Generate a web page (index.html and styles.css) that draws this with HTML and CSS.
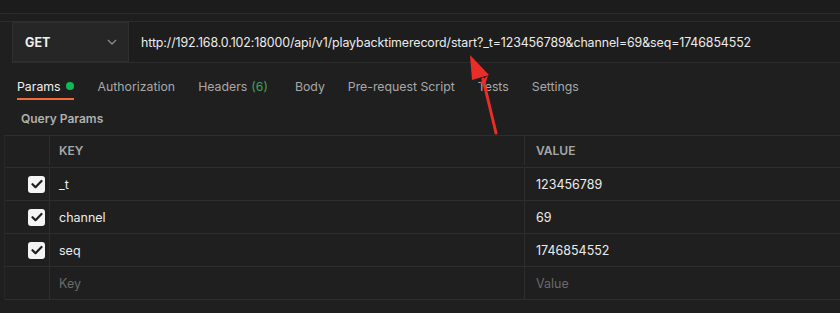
FILE: index.html
```html
<!DOCTYPE html>
<html>
<head>
<meta charset="utf-8">
<link rel="stylesheet" href="styles.css">
</head>
<body>
<div class="app">
  <div class="topstrip"><div class="strip-a"></div><div class="strip-b"></div></div>
  <div class="request">
    <div class="method">
      <span class="method-name">GET</span>
      <svg class="chev" width="10" height="6" viewBox="0 0 10 6"><path d="M1 1l4 4 4-4" fill="none" stroke="#8a8a8a" stroke-width="1.3"/></svg>
    </div>
    <div class="url">http://192.168.0.102:18000/api/v1/playbacktimerecord/start?_t=123456789&amp;channel=69&amp;seq=1746854552</div>
  </div>
  <div class="tabs">
    <div class="tab active">Params <span class="dot"></span></div>
    <div class="tab">Authorization</div>
    <div class="tab tab-wide">Headers <span class="count">(6)</span></div>
    <div class="tab">Body</div>
    <div class="tab">Pre-request Script</div>
    <div class="tab">Tests</div>
    <div class="tab">Settings</div>
  </div>
  <div class="qp">Query Params</div>
  <div class="table">
    <div class="row head">
      <div class="c-check"></div>
      <div class="c-key">KEY</div>
      <div class="c-val">VALUE</div>
    </div>
    <div class="row">
      <div class="c-check"><span class="cb"><svg width="12" height="10" viewBox="0 0 12 10"><path d="M1.5 5.2l3 3 6-6.2" fill="none" stroke="#1e1e1e" stroke-width="2.2" stroke-linecap="round" stroke-linejoin="round"/></svg></span></div>
      <div class="c-key">_t</div>
      <div class="c-val">123456789</div>
    </div>
    <div class="row">
      <div class="c-check"><span class="cb"><svg width="12" height="10" viewBox="0 0 12 10"><path d="M1.5 5.2l3 3 6-6.2" fill="none" stroke="#1e1e1e" stroke-width="2.2" stroke-linecap="round" stroke-linejoin="round"/></svg></span></div>
      <div class="c-key">channel</div>
      <div class="c-val">69</div>
    </div>
    <div class="row">
      <div class="c-check"><span class="cb"><svg width="12" height="10" viewBox="0 0 12 10"><path d="M1.5 5.2l3 3 6-6.2" fill="none" stroke="#1e1e1e" stroke-width="2.2" stroke-linecap="round" stroke-linejoin="round"/></svg></span></div>
      <div class="c-key">seq</div>
      <div class="c-val">1746854552</div>
    </div>
    <div class="row">
      <div class="c-check"></div>
      <div class="c-key placeholder">Key</div>
      <div class="c-val placeholder">Value</div>
    </div>
  </div>
  <svg class="arrow" width="60" height="90" viewBox="0 0 60 90">
    <path d="M38 80 L25 26" stroke="#ea2d28" stroke-width="3" stroke-linecap="round" fill="none"/>
    <path d="M12 2 L31 22 L14 27 Z" fill="#ea2d28"/>
    <path d="M22 30 L30 22 L27 32 Z" fill="#ea2d28"/>
  </svg>
</div>
</body>
</html>
```

FILE: styles.css
```css
* { box-sizing: border-box; }
html, body { margin: 0; padding: 0; }
body {
  background: #1f1f1f;
  font-family: Inter, "Noto Sans", "Liberation Sans", sans-serif;
  font-size: 12.5px;
  color: #e8e8e8;
  width: 840px;
  height: 313px;
  overflow: hidden;
}
.app { position: relative; height: 313px; }
.topstrip { height: 22px; }
.strip-a { height: 14px; background: #1c1c1c; border-bottom: 1px solid #2a2a2a; }
.strip-b { height: 8px; background: #1e1e1e; border-bottom: 1px solid #2c2c2c; }
.request {
  display: flex;
  height: 41px;
  margin-left: 12px;
  border-bottom: 1px solid #2c2c2c;
}
.method {
  width: 117px;
  background: #262626;
  border: 1px solid #2f2f2f;
  display: flex;
  align-items: center;
  justify-content: space-between;
  padding: 0 11px 0 12px;
}
.method-name { font-weight: 700; color: #f0f0f0; font-size: 12.5px; }
.url {
  flex: 1;
  display: flex;
  align-items: center;
  padding-left: 12px;
  background: #1d1d1d;
  color: #ececec;
  font-size: 12.4px;
  letter-spacing: -0.1px;
  white-space: nowrap;
}
.tabs {
  display: flex;
  height: 38px;
  padding-left: 17px;
  align-items: stretch;
}
.tab {
  display: flex;
  align-items: center;
  color: #a8a8a8;
  font-size: 12.3px;
  margin-right: 23px;
  position: relative;
  padding-top: 10px;
  padding-bottom: 2px;
}
.tab.active { color: #f0f0f0; margin-right: 24px; }
.tab.tab-wide { margin-right: 27px; }
.tab.active::after {
  content: "";
  position: absolute;
  left: 0; right: 0; bottom: 1px;
  height: 2px;
  background: #f26b3a;
}
.dot {
  display: inline-block;
  width: 8px; height: 8px;
  border-radius: 50%;
  background: #0cbb52;
  margin-left: 5px;
}
.count { color: #3aa55d; margin-left: 4px; }
.qp {
  height: 34px;
  display: flex;
  align-items: center;
  padding-left: 21px;
  color: #b0b0b0;
  font-weight: 600;
  font-size: 12px;
}
.table { border-top: 1px solid #2e2e2e; border-left: 1px solid #262626; margin-left: 4px; }
.row {
  display: flex;
  height: 33px;
  border-bottom: 1px solid #2e2e2e;
}
.row.head { height: 32px; padding-bottom: 2px; }
.c-check {
  width: 45px;
  border-right: 1px solid #2e2e2e;
  display: flex;
  align-items: center;
  justify-content: flex-end;
  padding-right: 4px;
}
.c-key {
  width: 475px;
  border-right: 1px solid #2e2e2e;
  display: flex;
  align-items: center;
  padding-left: 9px;
  color: #ececec;
}
.c-val {
  flex: 1;
  display: flex;
  align-items: center;
  padding-left: 11px;
  color: #ececec;
}
.head .c-key, .head .c-val { color: #a8a8a8; font-weight: 600; font-size: 12px; }
.placeholder { color: #6a6a6a !important; }
.cb {
  width: 17px; height: 17px;
  background: #f4f4f4;
  border-radius: 3px;
  display: flex;
  align-items: center;
  justify-content: center;
}
.arrow {
  position: absolute;
  left: 458px;
  top: 53px;
}
```
